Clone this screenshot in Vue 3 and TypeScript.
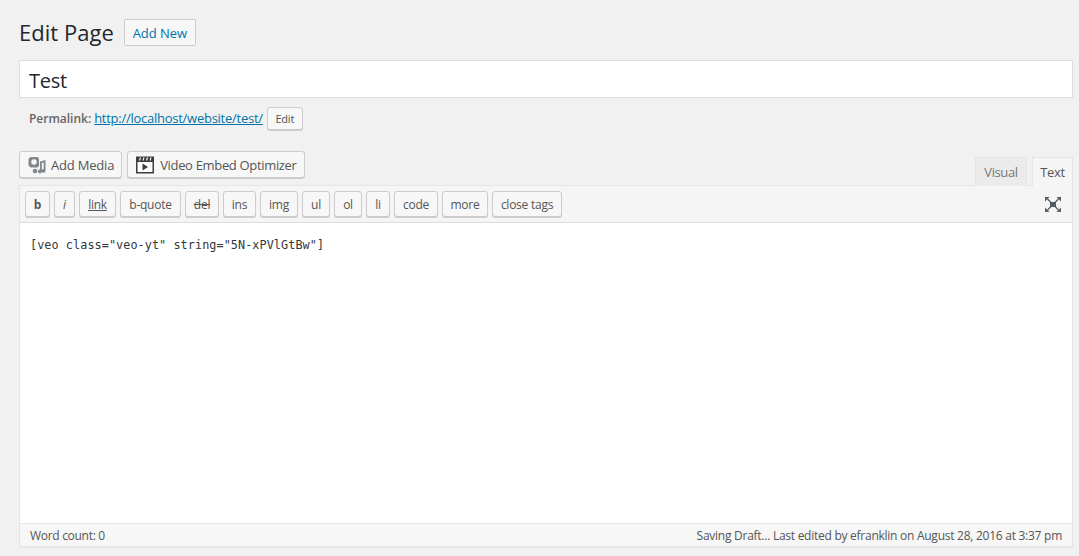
<script setup lang="ts">
const quicktags: { label: string; w: number; cls?: string }[] = [
  { label: 'b', w: 25, cls: 'tb-b' },
  { label: 'i', w: 21, cls: 'tb-i' },
  { label: 'link', w: 37, cls: 'tb-link' },
  { label: 'b-quote', w: 61 },
  { label: 'del', w: 34, cls: 'tb-del' },
  { label: 'ins', w: 33 },
  { label: 'img', w: 38 },
  { label: 'ul', w: 28 },
  { label: 'ol', w: 28 },
  { label: 'li', w: 24 },
  { label: 'code', w: 44 },
  { label: 'more', w: 46 },
  { label: 'close tags', w: 70 },
]
</script>

<template>
  <div class="wrap">
    <header class="heading">
      <h1>Edit Page</h1>
      <a class="add-new">Add New</a>
    </header>

    <div class="title-box">Test</div>

    <div class="permalink">
      <strong>Permalink:</strong>
      <a class="url">http://localhost/website/test/</a>
      <button class="btn edit-slug">Edit</button>
    </div>

    <div class="editor-tools">
      <div class="media-buttons">
        <button class="btn media media-add">
          <svg class="ico ico-media" width="18" height="18" viewBox="0 0 18 18">
            <path fill="#82878c" fill-rule="evenodd" d="M0.500 3 2.500 1h7l1.500 1.500V10l-1.500 1.500h-7L0.500 9.500ZM6 3.200a2.800 2.800 0 1 0 .01 0Z" />
            <path fill="#82878c" d="M12 5.500 17.500 4V14.800a2 1.900 0 1 1-1.800-1.900V6.600L13.800 7.100V15.500a2 1.900 0 1 1-1.800-1.900Z" />
            <circle cx="7" cy="15" r="2.300" fill="#82878c" />
          </svg>
          <span>Add Media</span>
        </button>
        <button class="btn media">
          <svg class="ico ico-video" width="18" height="18" viewBox="0 0 18 18">
            <path fill="#3c3c3c" d="M0 0.500h18v17H0Z" />
            <path fill="#fff" d="M1.500 6h15V16h-15Z" />
            <path fill="#3c3c3c" d="M6.500 7.500l5.500 3.500-5.500 3.500Z" />
            <path stroke="#fff" stroke-width="1.100" d="M3.500 4.500l1-3M7 4.500l1-3M10.500 4.500l1-3M14 4.500l1-3" fill="none" />
          </svg>
          <span>Video Embed Optimizer</span>
        </button>
      </div>
      <div class="tabs">
        <span class="tab">Visual</span>
        <span class="tab active">Text</span>
      </div>
    </div>

    <section class="editor">
      <div class="toolbar">
        <button
          v-for="tag in quicktags"
          :key="tag.label"
          class="btn tag"
          :class="tag.cls"
          :style="{ width: tag.w + 'px' }"
        >{{ tag.label }}</button>
        <svg class="fullscreen" width="16" height="15" viewBox="0 0 16 15">
          <path fill="#555d66" d="M5 5h6v5H5Z" />
          <path stroke="#555d66" stroke-width="1.200" fill="none" d="M2.500 2 6 5.500M13.500 2 10 5.500M2.500 13 6 9.500M13.500 13 10 9.500" />
          <path fill="#555d66" d="M0 0h4.500L0 4.500ZM16 0h-4.500L16 4.500ZM0 15h4.500L0 10.500ZM16 15h-4.500L16 10.500Z" />
        </svg>
      </div>
      <div class="content">[veo class="veo-yt" string="5N-xPVlGtBw"]</div>
      <footer class="status">
        <span class="count">Word count: 0</span>
        <span class="saved">Saving Draft... Last edited by efranklin on August 28, 2016 at 3:37 pm</span>
      </footer>
    </section>
  </div>
</template>

<style>
html, body {
  margin: 0;
  background: #f1f1f1;
}
</style>

<style scoped>
.wrap {
  box-sizing: border-box;
  width: 1079px;
  height: 556px;
  padding: 19px 6px 0 19px;
  overflow: hidden;
  background: #f1f1f1;
  color: #444;
  font-family: "Open Sans", "Noto Sans", sans-serif;
  font-size: 13px;
}
.heading {
  display: flex;
  align-items: flex-start;
  height: 27px;
}
h1 {
  margin: 0 10px 0 0;
  font-size: 22px;
  font-weight: 400;
  line-height: 27px;
  color: #23282d;
  letter-spacing: 0.03px;
}
.add-new {
  box-sizing: border-box;
  width: 72px;
  height: 27px;
  border: 1px solid #ccc;
  border-radius: 2px;
  background: #f7f7f7;
  color: #0073aa;
  font-size: 13px;
  font-weight: 500;
  text-align: center;
  line-height: 26px;
  letter-spacing: -0.05px;
}
.title-box {
  box-sizing: border-box;
  height: 38px;
  margin-top: 14px;
  padding-left: 9px;
  border: 1px solid #ddd;
  background: #fff;
  color: #23282d;
  font-size: 20px;
  line-height: 40px;
  letter-spacing: -0.3px;
}
.permalink {
  display: flex;
  align-items: center;
  height: 24px;
  margin-top: 8px;
  padding-left: 10px;
  color: #666;
  font-size: 12px;
}
.permalink strong {
  font-weight: 600;
  letter-spacing: -0.02px;
}
.url {
  margin-left: 3px;
  color: #0073aa;
  text-decoration: underline;
  font-size: 13px;
  letter-spacing: -0.26px;
}
.btn {
  box-sizing: border-box;
  border: 1px solid #ccc;
  border-radius: 3px;
  background: #f7f7f7;
  box-shadow: 0 1px 0 #ccc;
  color: #555;
  font-family: inherit;
  padding: 0;
  cursor: pointer;
}
.edit-slug {
  width: 36px;
  height: 23px;
  margin-left: 4px;
  font-size: 11px;
  letter-spacing: -0.2px;
}
.editor-tools {
  display: flex;
  justify-content: space-between;
  align-items: flex-end;
  height: 35px;
  margin-top: 20px;
}
.media-buttons {
  display: flex;
  gap: 5px;
  align-self: flex-start;
  padding-top: 1px;
}
.media {
  display: flex;
  align-items: center;
  height: 27px;
  padding: 0 7px 0 8px;
  font-size: 13px;
  letter-spacing: -0.33px;
}
.media-add {
  letter-spacing: -0.2px;
}
.ico {
  flex: none;
}
.ico-media {
  margin-right: 5px;
}
.ico-video {
  margin-right: 6px;
}
.tabs {
  display: flex;
  gap: 5px;
  position: relative;
  top: 1px;
}
.tab {
  box-sizing: border-box;
  height: 29px;
  width: 52px;
  text-align: center;
  border: 1px solid #e5e5e5;
  border-bottom: 0;
  background: #ebebeb;
  color: #777;
  font-size: 13px;
  line-height: 29px;
  letter-spacing: -0.4px;
}
.tab.active {
  width: 41px;
  background: #f5f5f5;
  color: #555;
}
.editor {
  box-sizing: border-box;
  height: 362px;
  border: 1px solid #e5e5e5;
  background: #fff;
  box-shadow: 0 1px 1px rgba(0, 0, 0, 0.04);
  display: flex;
  flex-direction: column;
}
.toolbar {
  display: flex;
  align-items: flex-start;
  gap: 4px;
  box-sizing: border-box;
  height: 37px;
  padding: 5px 11px 0 5px;
  background: #f5f5f5;
  border-bottom: 1px solid #ddd;
}
.tag {
  flex: none;
  height: 26px;
  padding-top: 1px;
  font-size: 12px;
  letter-spacing: -0.25px;
  white-space: nowrap;
}
.tb-b {
  font-weight: 700;
}
.tb-i {
  font-style: italic;
}
.tb-link {
  text-decoration: underline;
}
.tb-del {
  text-decoration: line-through;
}
.fullscreen {
  margin-left: auto;
  margin-top: 6px;
}
.content {
  flex: 1;
  padding: 12px 10px 0;
  color: #32373c;
  font-family: "DejaVu Sans Mono", "Liberation Mono", monospace;
  font-size: 11.800px;
  letter-spacing: 0.07px;
  line-height: 20px;
  white-space: pre;
}
.status {
  display: flex;
  justify-content: space-between;
  align-items: center;
  box-sizing: border-box;
  height: 23px;
  padding: 1px 10px 0;
  border-top: 1px solid #e5e5e5;
  background: #f7f7f7;
  color: #555;
  font-size: 12px;
}
.count {
  letter-spacing: -0.3px;
}
.saved {
  letter-spacing: -0.26px;
}
</style>
